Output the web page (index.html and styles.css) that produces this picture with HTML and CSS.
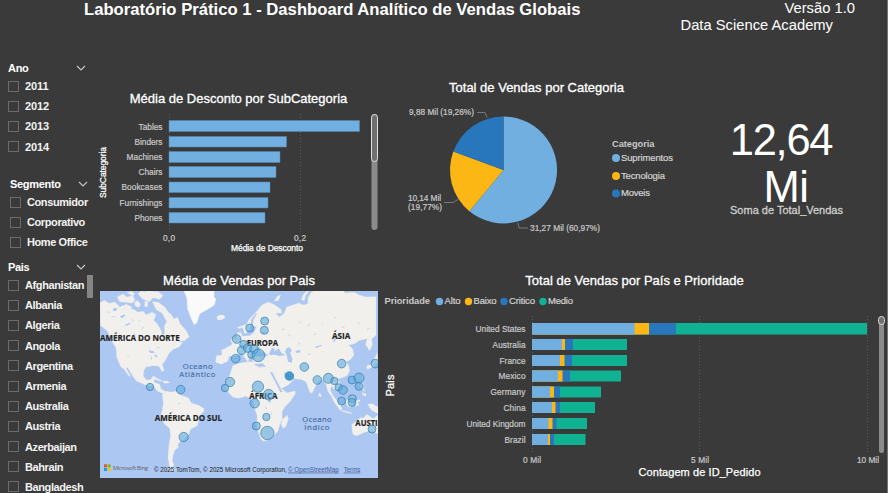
FILE: index.html
```html
<!DOCTYPE html>
<html lang="pt-BR">
<head>
<meta charset="utf-8">
<title>Dashboard Analítico de Vendas Globais</title>
<link rel="stylesheet" href="styles.css">
</head>
<body>
<div class="page">
  <header class="header">
    <h1>Laboratório Prático 1 - Dashboard Analítico de Vendas Globais</h1>
    <div class="credits"><p class="version">Versão 1.0</p><p>Data Science Academy</p></div>
  </header>
  <div class="content">
    <aside class="sidebar">
      <section class="slicer ano">
        <h3>Ano<svg class="chev" viewBox="0 0 10 6"><path d="M1 1l4 4 4-4"/></svg></h3>
        <ul><li>2011</li><li>2012</li><li>2013</li><li>2014</li></ul>
      </section>
      <section class="slicer segmento">
        <h3>Segmento<svg class="chev" viewBox="0 0 10 6"><path d="M1 1l4 4 4-4"/></svg></h3>
        <ul><li>Consumidor</li><li>Corporativo</li><li>Home Office</li></ul>
      </section>
      <section class="slicer pais">
        <h3>Pais<svg class="chev" viewBox="0 0 10 6"><path d="M1 1l4 4 4-4"/></svg></h3>
        <ul><li>Afghanistan</li><li>Albania</li><li>Algeria</li><li>Angola</li><li>Argentina</li><li>Armenia</li><li>Australia</li><li>Austria</li><li>Azerbaijan</li><li>Bahrain</li><li>Bangladesh</li></ul>
        <span class="thumb"></span>
      </section>
    </aside>

    <div class="middle">
      <section class="discount">
        <h2>Média de Desconto por SubCategoria</h2>
        <svg class="chart" width="286" height="148" viewBox="97 108 286 148">
          <path class="grid" d="M169.5 114V232M300.5 114V232"/>
          <g class="alto outlined">
            <path d="M169 120.5H359.5V131.500H169z"/><path d="M169 136.500H286.500V147H169z"/><path d="M169 151.500H280V162.500H169z"/><path d="M169 166.500H276V177.500H169z"/><path d="M169 182H270V192.500H169z"/><path d="M169 197.500H268V208H169z"/><path d="M169 212.500H265V223H169z"/>
          </g>
          <g class="axis" text-anchor="end">
            <text x="162.500" y="129.500" textLength="24">Tables</text><text x="162.500" y="145" textLength="28">Binders</text><text x="162.500" y="160" textLength="36">Machines</text><text x="162.500" y="175" textLength="24">Chairs</text><text x="162.500" y="190" textLength="41">Bookcases</text><text x="162.500" y="206" textLength="43">Furnishings</text><text x="162.500" y="221" textLength="28">Phones</text>
          </g>
          <g class="axis" text-anchor="middle"><text x="169" y="241" textLength="12">0,0</text><text x="300" y="241" textLength="12">0,2</text></g>
          <text class="axis-title" x="231" y="251" textLength="72">Média de Desconto</text>
          <text class="axis-title" transform="translate(106 198) rotate(-90)" textLength="51">SubCategoria</text>
          <rect class="track" x="371.500" y="114" width="6" height="116" rx="3"/>
          <rect class="handle" x="371.500" y="114.500" width="6" height="47" rx="3"/>
        </svg>
      </section>
      <section class="sales-map">
        <h2>Média de Vendas por Pais</h2>
        <svg class="map" width="278" height="187" viewBox="15 18 834 561">
          <rect class="sea" x="15" y="18" width="834" height="561"/>
          <g class="land">
            <path d="M15 53l14-7 13 9 18-4 14 15 14-6 12 13 14-1 14 9 17-2 8 10 20-7 10 7-7 17 11 11 12 20 2 15 8-7-1-22 8-15-8-18 18-5 11 17 11-5 8 21 13 13 8 12 6 12-15 12-21 2 16 4-10 12-18 8-14 13-8 17-11 15 5 17-5 6-10-17-17-2-22 4-7 12-1 15 10 13 13-3 6-10 8 3-6 15 18 7 4 14 16 9-6 6-20-8-12-15-22-3-29-12-12-16-15-25-5 1 13 24-4 1-15-22-9-5-13-30-2-29-11-17-14-32-22-18z"/>
            <path d="M66 36l18-9 13 9 16-5 7 14-9 10-17-3-20-2zM96 23l13-4 11 8-8 5zM129 27l9-9 14 2 7-2 31 2 14 12-10 11-20-5-11 12-20-8zM119 50l10-3 8 12-7 9-11-7zM150 48l9 2-2 17-9-4zM172 50l18 2 20 15 12 17 13 18-7 14-15-10-12-22-17-10zM92 57l19 9-7 10-17-5zM165 83l15 5-7 9-12-4z"/>
            <path d="M202 328l11-9 14 2 18-2 14 12 22 8 8 15 22 7 15 9 1 9-15 16-4 26-21 12-7 18-15 15-10 2-7 12 3 6-12 10-6 17-1 16 5 10-4 8 8 8-5 3-8-5-5-12-4-23 3-40 5-25-3-23-15-12-13-24 6-19 3-19z"/>
            <path class="ice" d="M267 18l9 24 1 29 12 31 8 17 9-6 8-26 22-13 22-13 5-19-6-7 1-17z"/>
            <path d="M365 95l10-5 12 1 3 7-9 6-13 1zM170 280l15-1 16 8-5 2-16-6zM202 288l15 0 7 5-15 2zM423 150l8-9 6 8-2 11 10 13-6 8-14 3 3-12-4-9zM409 163l8-6 5 8-5 9-9-2z"/>
            <path d="M455 118l8-16 21-22 17-20 18-9 17 7 22 15 3 11-19 1 11 11 14-10 8-20 20-7 17-5 13 6 13-4 1-18 11-18 22-7 12 5 14-12 24-4 18 8 10 14 27-2 18 9 18 5 30-1v115l-13 12 2 17-8 18-12-17 4-19-22 5-15 10-18 4 12 12 4 18-10 13-14 8 8 10 3 17-8 14-19 8-9 2 10 17-11 17-12-5-5-10-4 15 12 22-4 2-16-22-5-21-9-11-11 1-12 17-10 21-7-3-10-31-13-7-16-2-20-4-8-9 10 12 8 3-15 16-18 9-19 7-7-11-10-26-11-18-4-17-7-9-25 2-6-11 6-12 18 2 22-3-4-7-20-9-2-13-12 9-9 17-9 10-4 12-8-12-12-15-11 5-8 4-17-1-5 16-19 9-17-6 2-20 17-2-2-14 12-6 18-10 9-14 12-4 2-18 5-3 5 13 22-2 14-10 6-17-10-2 1-17 10-19-3-3-14 21-1 18-8 15-9 9-8-20-8 4-7-4z"/>
            <path d="M413 242l14-6 21-4 28-2 3 10 19 9 8-4 29 6 5 16 12 27 9 18 15 11 24-5 1 8-14 22-18 18-8 15 1 22-8 17-5 18-16 18-13 9-15 3-8-6-7-22-5-22 2-26-8-20-3-21-10-12-14-5-21 6-18-4-13-14-7-13 2-22 10-18z"/>
            <path d="M577 390l3 13-8 22-8 5-5-12 4-15z"/>
            <path d="M770 419l14-11 12-10 10 1 9-11 11 7 9 6 14-12v58l-11-6-16-3-17 5-19 9-12-3-3-16z"/>
            <path d="M708 330l9 6 20 24 4 15-7-1-17-24zM754 347l18-16 8 6-7 24-12 5-8-9zM741 376l29 7-1 3-29-7zM782 347l12-3 1 5-7 2 4 12-5-3-5 6zM798 292l7 3 0 15 5 9-6-3-6-12zM802 323l11 4-1 8-10-7zM818 358l13-2 18 10v20l-20-11zM673 323l6 8-3 6-5-5zM801 271l5 1-4 10zM814 244l15-6 9-17 8-17 3 26-9 12-15 6-7 6z"/>
            <path d="M474 233l3-1 2 12-4-1zM496 245l9 1-5 4zM538 48l10-15 9-3-7 17zM619 44l5-14 11-12 7 1-10 12-4 16z"/>
          </g>
          <g class="lake">
            <path d="M523 205l8-17 9 3-3 9 14-10 8 13 13 7-20 3-13-4-15 2z"/>
            <path d="M575 190l10-3 5 11-5 5 7 18-2 12-11-3-4-21-5-9z"/>
            <path d="M525 261l7 1 13 26 18 33-7 0-14-28zM569 261l10 10 9 1-2 5-10-2-9-12z"/>
            <path d="M519 343l9 1-2 9-6-1zM512 359l3 13-3 1zM528 378l2 12-3-1zM601 198l14-3 1 7-11 2zM661 185l20-6-1 3-17 8zM714 168l10-15 3 1-9 18zM500 143l8-5 3 5-6 4z"/>
            <path d="M167 207l4 16-3 1zM178 207l10 6-6 5zM160 196l14 2 6 5-14 1z"/>
            <path d="M58 68l10 3-7 8-9-3zM76 94l13-6 2 5-13 7zM90 119l14-6 2 4-14 6zM117 142l5 10-5-3z"/>
          </g>
          <path class="specks" d="M35 80l8 3M49 96l13-2M110 101l6 8M130 110l7-5M145 125l-5 8M185 187l9 2M97 213l5 3M248 356l8-1M276 385l4 8M560 135l10-4M580 149l9 5M612 109l7 7M638 125l5-9M655 149l9-3M678 115l6 6M716 100l8-4M740 127l9-2M789 112l7 6M816 133l8-3M610 174l7 4M638 207l9 1M745 221l5 7M778 190l7-3"/>
          <g class="continent">
            <text x="15" y="169" textLength="239" lengthAdjust="spacingAndGlyphs">AMÉRICA DO NORTE</text><text x="179" y="407" textLength="202" lengthAdjust="spacingAndGlyphs">AMÉRICA DO SUL</text><text x="455" y="182" textLength="94" lengthAdjust="spacingAndGlyphs">EUROPA</text><text x="711" y="162" textLength="55" lengthAdjust="spacingAndGlyphs">ÁSIA</text><text x="463" y="341" textLength="84" lengthAdjust="spacingAndGlyphs">ÁFRICA</text><text x="781" y="424" textLength="67" lengthAdjust="spacingAndGlyphs">AUSTI</text>
          </g>
          <g class="ocean"><text x="263" y="251" textLength="90">Oceano</text><text x="253" y="276" textLength="108">Atlântico</text><text x="622" y="410" textLength="88">Oceano</text><text x="628" y="435" textLength="75">Índico</text></g>
          <g class="bubbles">
            <circle cx="165" cy="306" r="11"/><circle cx="257" cy="314" r="13"/><circle cx="266" cy="456" r="14"/><circle cx="425" cy="162" r="13"/><circle cx="422" cy="221" r="13"/><circle cx="405" cy="291" r="14"/><circle cx="390" cy="309" r="11"/>
            <circle cx="509" cy="108" r="12"/><circle cx="508" cy="136" r="12"/><circle cx="464" cy="129" r="12"/><circle cx="446" cy="178" r="12"/><circle cx="440" cy="196" r="13"/><circle cx="458" cy="189" r="13"/><circle cx="477" cy="193" r="13"/><circle cx="469" cy="209" r="11"/><circle cx="490" cy="211" r="19"/>
            <circle cx="628" cy="246" r="13"/><circle class="dense" cx="583" cy="273" r="13"/><circle cx="740" cy="236" r="13"/><circle cx="841" cy="236" r="13"/><circle cx="667" cy="285" r="13"/><circle cx="700" cy="280" r="15"/><circle cx="718" cy="288" r="11"/><circle cx="731" cy="307" r="11"/><circle cx="744" cy="315" r="13"/><circle cx="771" cy="285" r="12"/><circle cx="792" cy="279" r="15"/><circle cx="792" cy="304" r="12"/><circle cx="740" cy="348" r="12"/><circle cx="772" cy="341" r="12"/><circle cx="771" cy="352" r="12"/><circle cx="831" cy="432" r="12"/>
            <circle cx="489" cy="305" r="17"/><circle cx="521" cy="329" r="16"/><circle cx="479" cy="355" r="14"/><circle cx="514" cy="396" r="11"/><circle cx="484" cy="423" r="12"/><circle cx="517" cy="444" r="20"/>
          </g>
          <g class="ms"><path fill="#f25022" d="M27 538h9v9h-9z"/><path fill="#7fba00" d="M38 538h9v9h-9z"/><path fill="#00a4ef" d="M27 549h9v9h-9z"/><path fill="#ffb900" d="M38 549h9v9h-9z"/><text x="53" y="554" textLength="106">Microsoft Bing</text></g>
          <g class="attribution"><text x="177" y="560" textLength="398" lengthAdjust="spacingAndGlyphs">© 2025 TomTom, © 2025 Microsoft Corporation,</text><text class="link" x="579" y="560" textLength="152" lengthAdjust="spacingAndGlyphs">© OpenStreetMap</text><text class="link" x="746" y="560" textLength="50" lengthAdjust="spacingAndGlyphs">Terms</text></g>
        </svg>
      </section>
    </div>

    <div class="right">
      <div class="top-row">
        <section class="category">
          <h2>Total de Vendas por Categoria</h2>
          <svg class="chart" width="307" height="150" viewBox="383 96 307 150">
            <path class="alto" d="M503.500 170V116.500A53.500 53.500 0 1 1 469.400 211.200z"/>
            <path class="baixo" d="M503.500 170L469.400 211.200A53.500 53.500 0 0 1 453.300 151.500z"/>
            <path class="critico" d="M503.500 170L453.300 151.500A53.500 53.500 0 0 1 503.500 116.500z"/>
            <path class="leader" d="M477 112.500h8l2 5M444 202.500h9l5-3M518 223l1 5h9"/>
            <g class="axis">
              <text x="409" y="115" textLength="65">9,88 Mil (19,26%)</text><text x="408" y="201" textLength="33">10,14 Mil</text><text x="408" y="210" textLength="34">(19,77%)</text><text x="530" y="231" textLength="70">31,27 Mil (60,97%)</text>
            </g>
            <text class="legend-title" x="612" y="147" textLength="42.500">Categoria</text>
            <circle class="alto" cx="616" cy="158" r="4"/><circle class="baixo" cx="616" cy="176" r="4"/><circle class="critico" cx="616" cy="193.500" r="4"/>
            <g class="legend"><text x="621" y="161" textLength="52">Suprimentos</text><text x="621" y="179" textLength="44">Tecnologia</text><text x="621" y="196" textLength="29">Moveis</text></g>
          </svg>
        </section>
        <section class="card">
          <p class="value">12,64</p>
          <p class="value unit">Mi</p>
          <p class="caption">Soma de Total_Vendas</p>
        </section>
      </div>
      <section class="priority">
        <h2>Total de Vendas por País e Prioridade</h2>
        <svg class="chart" width="504" height="203" viewBox="383 290 504 203">
          <text class="legend-title" x="384.500" y="304" textLength="45.500">Prioridade</text>
          <circle class="alto" cx="439.500" cy="301.500" r="3.700"/><circle class="baixo" cx="468.500" cy="301.500" r="3.700"/><circle class="critico" cx="504" cy="301.500" r="3.700"/><circle class="medio" cx="543" cy="301.500" r="3.700"/>
          <g class="legend"><text x="444.500" y="304" textLength="16">Alto</text><text x="473.500" y="304" textLength="23">Baixo</text><text x="509" y="304" textLength="26">Critico</text><text x="548" y="304" textLength="25">Medio</text></g>
          <path class="grid" d="M532.500 316V453M699.500 316V453M867.500 316V453"/>
          <path class="medio" d="M532 323H867V334.500H532zM532 339H627V350H532zM532 355H627V366H532zM532 370.500H621V381.500H532zM532 386.500H601V397.500H532zM532 402H595V413H532zM532 418H587V429H532zM532 434H585.500V445H532z"/>
          <path class="critico" d="M532 323H676V334.500H532zM532 339H573V350H532zM532 355H572V366H532zM532 370.500H570V381.500H532zM532 386.500H560V397.500H532zM532 402H560V413H532zM532 418H556.500V429H532zM532 434H554V445H532z"/>
          <path class="baixo" d="M532 323H649V334.500H532zM532 339H565V350H532zM532 355H564.500V366H532zM532 370.500H562.500V381.500H532zM532 386.500H554V397.500H532zM532 402H555.500V413H532zM532 418H552.500V429H532zM532 434H550V445H532z"/>
          <path class="alto" d="M532 323H634.500V334.500H532zM532 339H562V350H532zM532 355H560V366H532zM532 370.500H558V381.500H532zM532 386.500H550V397.500H532zM532 402H552V413H532zM532 418H548.500V429H532zM532 434H548V445H532z"/>
          <g class="axis" text-anchor="end"><text x="525.500" y="332" textLength="50">United States</text><text x="525.500" y="348" textLength="33">Australia</text><text x="525.500" y="364" textLength="26">France</text><text x="525.500" y="379" textLength="27">Mexico</text><text x="525.500" y="395" textLength="35">Germany</text><text x="525.500" y="411" textLength="22">China</text><text x="525.500" y="427" textLength="59">United Kingdom</text><text x="525.500" y="443" textLength="21">Brazil</text></g>
          <g class="axis" text-anchor="middle"><text x="532" y="463" textLength="18">0 Mil</text><text x="700" y="463" textLength="18">5 Mil</text><text x="868" y="463" textLength="22">10 Mil</text></g>
          <text class="axis-title large" x="638.500" y="475.500" textLength="122">Contagem de ID_Pedido</text>
          <text class="axis-title large" transform="translate(394 396.500) rotate(-90)" textLength="22">Pais</text>
          <rect class="track" x="879" y="317" width="5" height="136" rx="2.500"/>
          <rect class="handle" x="878.500" y="316.500" width="6" height="8" rx="3"/>
        </svg>
      </section>
    </div>
  </div>
</div>
</body>
</html>
```

FILE: styles.css
```css
*, *::before { box-sizing: border-box; margin: 0; padding: 0; }
body { background: #3a3a3a; color: #fff; font-family: "Liberation Sans", Arial, sans-serif; overflow: hidden; }
.page { width: 888px; height: 493px; border-right: 1px solid #757575; overflow: hidden; }
.header { display: flex; justify-content: space-between; height: 58px; padding-left: 84px; }
h1 { font-size: 16.66px; line-height: 19px; white-space: nowrap; }
.credits { padding-right: 54px; font-size: 14.75px; line-height: 17px; text-align: right; }
.version { margin-right: -22px; }
.content { display: flex; height: 435px; }
.sidebar { width: 97px; flex: none; }
.slicer { position: relative; padding-left: 8px; }
.slicer h3 { display: flex; align-items: center; justify-content: space-between; width: 78px; height: 18px; padding-top: 2px; font-size: 11px; letter-spacing: -.3px; }
.ano { height: 116px; }
.segmento { height: 83px; padding-left: 10px; }
.pais { height: 236px; }
.slicer ul { list-style: none; }
.slicer li { display: flex; align-items: center; gap: 6px; height: 20.2px; font-size: 11px; letter-spacing: -.4px; font-weight: bold; color: #f3f3f3; white-space: nowrap; }
.ano li { letter-spacing: -.1px; }
.slicer li::before { content: ""; width: 11px; height: 11px; flex: none; border: 1px solid #6b6b6b; }
.chev { width: 10px; height: 6px; fill: none; stroke: #c8c8c8; stroke-width: 1.1; }
.thumb { position: absolute; left: 87px; top: 18px; width: 6px; height: 23px; background: #858585; }
.middle { width: 286px; flex: none; }
.right { width: 504px; flex: none; }
h2 { height: 20px; font-size: 13px; font-weight: normal; line-height: 20px; text-align: center; -webkit-text-stroke: .3px #fff; white-space: nowrap; }
svg { display: block; }
.discount { padding-top: 30px; height: 212px; }
.discount h2 { width: 283px; padding-top: 1px; }
.map { margin: 1px 0 0 3px; }
.top-row { display: flex; height: 212px; }
.category { width: 307px; padding-top: 19px; }
.category h2 { margin-bottom: -1px; padding-top: 1px; }
.card { width: 197px; padding-top: 59px; text-align: center; }
.value { margin-right: 15px; font-size: 43.5px; line-height: 46.5px; letter-spacing: -1.3px; }
.value.unit { margin-right: 5px; letter-spacing: -.5px; }
.caption { margin-right: 4px; margin-top: -5px; font-size: 11px; line-height: 10px; color: #cfcfcf; -webkit-text-stroke: .3px #cfcfcf; }
.sales-map h2 { width: 284px; padding-top: 1px; }
.priority h2 { margin-left: -1px; padding-top: 1px; }
.alto { fill: #70afe0; }
.baixo { fill: #fdb714; }
.critico { fill: #2877bc; }
.medio { fill: #11b193; }
.outlined { stroke: #548bb3; stroke-width: .5; }
.grid { fill: none; stroke: #595959; stroke-width: 1; stroke-dasharray: 1 2; }
.axis { font-size: 8.3px; fill: #c9c9c9; stroke: #c9c9c9; stroke-width: .2; }
.axis-title { font-size: 8.5px; fill: #fff; stroke: #fff; stroke-width: .25; }
.axis-title.large { font-size: 11px; }
.legend { font-size: 9.5px; fill: #d4d4d4; stroke: #d4d4d4; stroke-width: .2; }
.legend-title { font-size: 9.3px; font-weight: bold; fill: #c9c9c9; }
.leader { fill: none; stroke: #797979; }
.track { fill: #8b8b8b; }
.handle { fill: #707070; stroke: #dedede; stroke-width: 1; }
.sea, .lake { fill: #acc7f2; }
.land { fill: #f1f0ed; stroke: #e3e6e8; stroke-width: 1; }
.ice { fill: #fafafa; }
.specks { fill: none; stroke: #c3d3ec; stroke-width: 2.5; }
.continent { font: bold 26px "Open Sans", sans-serif; fill: #222; stroke: #222; stroke-width: .5; }
.ocean { font: 23px "Open Sans", sans-serif; fill: #4068a0; stroke: #4068a0; stroke-width: .4; }
.bubbles { fill: #5eaadb; fill-opacity: .6; stroke: #347aaa; stroke-width: 2; }
.bubbles .dense { fill: #2989cb; fill-opacity: .85; }
.ms { font: 18px "Open Sans", sans-serif; fill: #666; }
.attribution { font-size: 19px; fill: #222; }
.attribution .link { fill: #465b9a; text-decoration: underline; }
```
